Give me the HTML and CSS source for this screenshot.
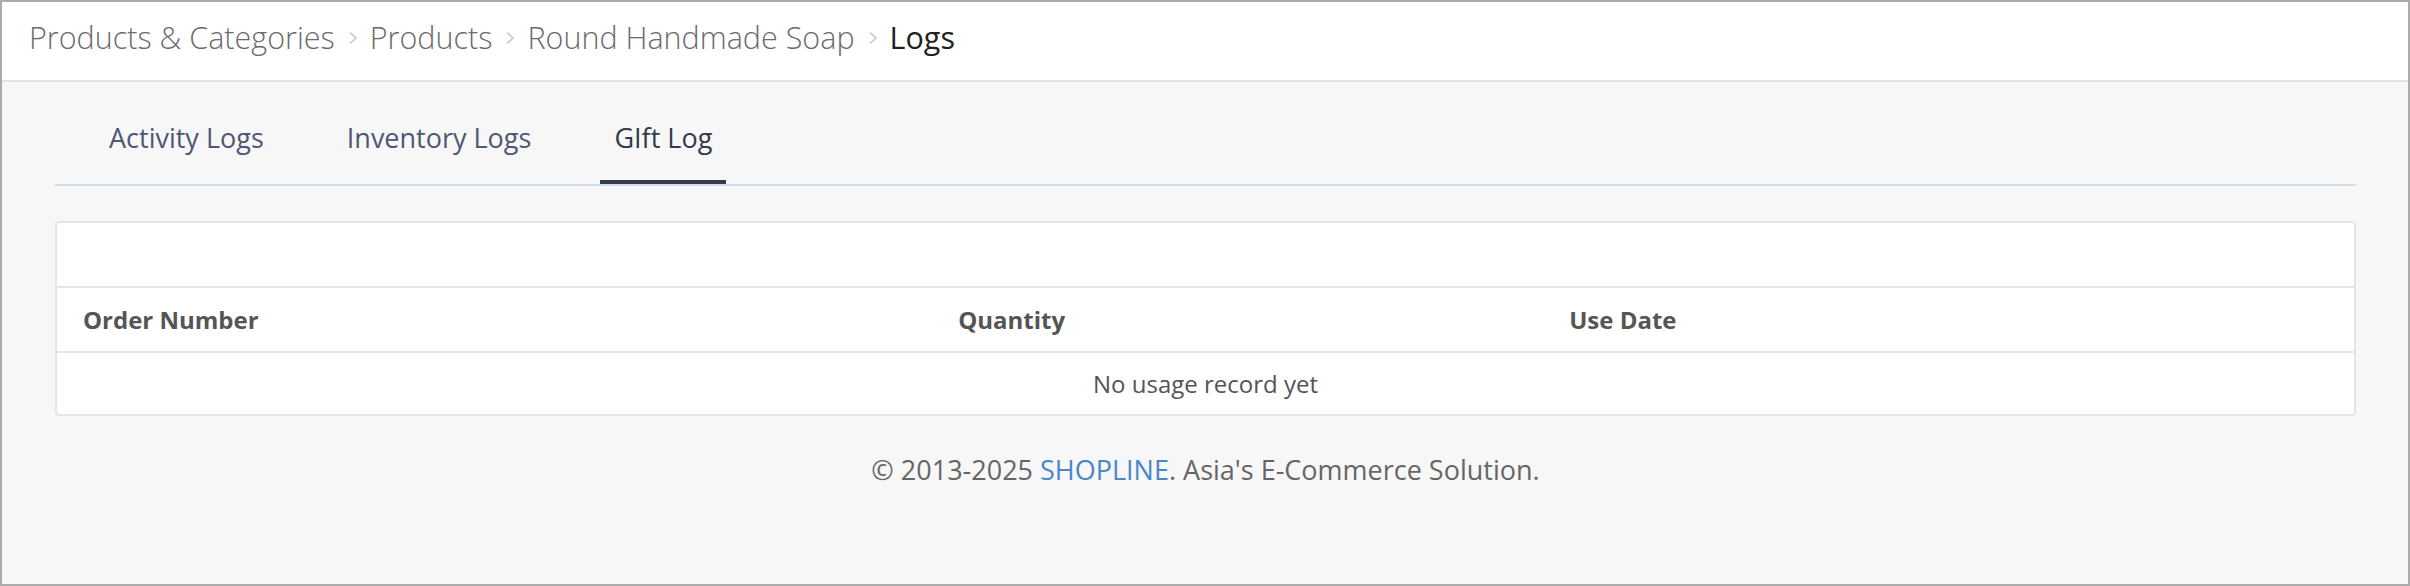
FILE: index.html
```html
<!DOCTYPE html>
<html lang="en">
<head>
  <meta charset="UTF-8" />
  <meta name="viewport" content="width=device-width, initial-scale=1.0"/>
  <title>Logs</title>
  <link rel="stylesheet" href="styles.css">
</head>
<body>
  <div class="frame">

    <div class="topbar">
      <nav class="breadcrumb">
        <a href="#">Products &amp; Categories</a>
        <svg class="sep" width="10" height="14" viewBox="0 0 10 14"><polyline points="2,1.5 8,7 2,12.5" fill="none" stroke="#c3c7cf" stroke-width="1.6"/></svg>
        <a href="#">Products</a>
        <svg class="sep" width="10" height="14" viewBox="0 0 10 14"><polyline points="2,1.5 8,7 2,12.5" fill="none" stroke="#c3c7cf" stroke-width="1.6"/></svg>
        <a href="#">Round Handmade Soap</a>
        <svg class="sep" width="10" height="14" viewBox="0 0 10 14"><polyline points="2,1.5 8,7 2,12.5" fill="none" stroke="#c3c7cf" stroke-width="1.6"/></svg>
        <span class="current">Logs</span>
      </nav>
    </div>

    <div class="content">
      <ul class="tabs">
        <li class="tab">Activity Logs</li>
        <li class="tab">Inventory Logs</li>
        <li class="tab active">GIft Log</li>
      </ul>

      <div class="panel">
        <div class="panel-head"></div>
        <table class="log-table">
          <colgroup>
            <col class="col-order">
            <col class="col-qty">
            <col>
          </colgroup>
          <thead>
            <tr>
              <th>Order Number</th>
              <th>Quantity</th>
              <th>Use Date</th>
            </tr>
          </thead>
          <tbody>
            <tr>
              <td class="empty" colspan="3">No usage record yet</td>
            </tr>
          </tbody>
        </table>
      </div>

      <footer class="footer">
        © 2013-2025 <a href="#">SHOPLINE</a>. Asia's E-Commerce Solution.
      </footer>
    </div>

  </div>
</body>
</html>
```

FILE: styles.css
```css
* {
  box-sizing: border-box;
}

body {
  margin: 0;
  padding: 0;
  font-family: "Open Sans", "Liberation Sans", sans-serif;
  color: #555;
}

.frame {
  height: 586px;
  border: 2px solid #ababab;
  background: #f7f7f7;
  display: flex;
  flex-direction: column;
}

/* breadcrumb bar */
.topbar {
  height: 80px;
  background: #fff;
  border-bottom: 2px solid #e5e5e5;
  display: flex;
  align-items: center;
  padding: 0 0 8px 27px;
}

.breadcrumb {
  display: flex;
  align-items: center;
  font-size: 30.5px;
  font-weight: 300;
  line-height: 40px;
}

.breadcrumb a {
  color: #6b6b6b;
  text-decoration: none;
}

.breadcrumb .current {
  color: #222;
  font-weight: 400;
}

.breadcrumb .sep {
  margin: 2px 12px 0 13px;
}

/* tabs */
.content {
  flex: 1;
  padding: 0 52px 0 53px;
}

.tabs {
  list-style: none;
  margin: 36px 0 0;
  padding: 0 0 0 40px;
  display: flex;
  gap: 55px;
  border-bottom: 2px solid #d3dde6;
}

.tab {
  padding: 0 14px 22px;
  font-size: 27px;
  line-height: 40px;
  color: #4f5873;
  border-bottom: 4px solid transparent;
  cursor: pointer;
}

.tab.active {
  color: #333a4d;
  border-bottom-color: #363a4c;
}

/* panel + table */
.panel {
  margin-top: 35px;
  background: #fff;
  border: 2px solid #e5e5e5;
  border-radius: 4px;
}

.panel-head {
  height: 65px;
  border-bottom: 2px solid #e5e5e5;
}

.log-table {
  width: 100%;
  border-collapse: collapse;
  font-size: 24px;
}

.col-order {
  width: 38.1%;
}

.col-qty {
  width: 26.6%;
}

.log-table th {
  height: 64px;
  padding: 0 26px;
  text-align: left;
  font-weight: 700;
  color: #555;
  border-bottom: 2px solid #e5e5e5;
}

.log-table td {
  height: 62px;
  padding: 0 26px;
  color: #555;
}

.log-table td.empty {
  text-align: center;
}

/* footer */
.footer {
  margin-top: 34px;
  text-align: center;
  font-size: 27px;
  line-height: 40px;
  color: #666;
}

.footer a {
  color: #4a86c8;
  text-decoration: none;
}
```
